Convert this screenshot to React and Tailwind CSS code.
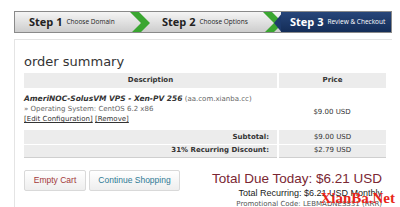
import React from 'react'

function Chevron({ dark }) {
  return (
    <svg width="20" height="22" viewBox="0 0 20 22" className="shrink-0 -mx-[2px]">
      <polygon points="0,0 9,0 20,11 9,22 0,22 11,11" fill="#3aa631" />
      {dark && <polygon points="11,11 20,0 20,22" fill="#1d3a6c" />}
    </svg>
  )
}

export default function App() {
  return (
    <div className="w-[400px] h-[207px] bg-white overflow-hidden relative" style={{ fontFamily: '"DejaVu Sans", Verdana, sans-serif' }}>
      <div className="pt-[11px] px-[14px]">
        {/* steps */}
        <div className="flex h-[22px] w-[378px] border border-[#8a8a8a] bg-gradient-to-b from-[#f5f5f5] to-[#cdcdcd] text-[#222] overflow-hidden whitespace-nowrap" style={{ fontFamily: '"Open Sans", sans-serif' }}>
          <div className="flex items-center w-[117px] pl-[14px] gap-[4px] shrink-0">
            <span className="text-[11px] font-bold">Step 1</span>
            <span className="text-[6.5px]">Choose Domain</span>
          </div>
          <Chevron />
          <div className="flex items-center flex-1 pl-[14px] gap-[4px]">
            <span className="text-[11px] font-bold">Step 2</span>
            <span className="text-[6.5px]">Choose Options</span>
          </div>
          <Chevron dark />
          <div className="flex items-center w-[110px] pl-[9px] gap-[4px] bg-gradient-to-b from-[#27467a] to-[#142d58] text-white shrink-0">
            <span className="text-[11px] font-bold">Step 3</span>
            <span className="text-[6.5px]">Review &amp; Checkout</span>
          </div>
        </div>

        {/* panel */}
        <div className="mt-[6px] w-[378px] border-l border-t border-[#e4e4e4] px-[9px] pt-[14px]">
          <div className="text-[13px] text-[#333] leading-[16px]">order summary</div>
          <table className="mt-[3px] w-[362px] text-[7px] text-[#333] border-collapse whitespace-nowrap">
            <thead>
              <tr className="bg-[#ececec] h-[15px]">
                <th className="font-bold text-center border-r-2 border-white w-[254px]">Description</th>
                <th className="font-bold text-center">Price</th>
              </tr>
            </thead>
            <tbody>
              <tr className="h-[42px]">
                <td className="align-middle leading-[10px]">
                  <div><span className="italic font-bold text-[7.5px]">AmeriNOC-SolusVM VPS - Xen-PV 256</span> <span className="text-[#666]">(aa.com.xianba.cc)</span></div>
                  <div className="text-[#666]">» Operating System: CentOS 6.2 x86</div>
                  <div className="text-[#333]"><span className="underline">[Edit Configuration]</span> <span className="underline">[Remove]</span></div>
                </td>
                <td className="text-center align-middle pt-[6px]">$9.00 USD</td>
              </tr>
              <tr className="bg-[#ececec] h-[14px] border-b border-white">
                <td className="text-right font-bold pr-[8px] border-r-2 border-white">Subtotal:</td>
                <td className="text-center">$9.00 USD</td>
              </tr>
              <tr className="bg-[#ececec] h-[13px] border-b border-[#cfcfcf]">
                <td className="text-right font-bold pr-[8px] border-r-2 border-white">31% Recurring Discount:</td>
                <td className="text-center">$2.79 USD</td>
              </tr>
            </tbody>
          </table>

          <div className="flex justify-between mt-[12px] whitespace-nowrap" style={{ fontFamily: '"Liberation Sans", Arial, sans-serif' }}>
            <div className="flex gap-[3px] h-[21px]">
              <button className="w-[62px] text-[8.5px] text-[#a33a3a] border border-[#d9d9d9] bg-gradient-to-b from-white to-[#eeeeee] rounded-[2px]">Empty Cart</button>
              <button className="w-[91px] text-[8.5px] text-[#2f7a95] border border-[#d9d9d9] bg-gradient-to-b from-white to-[#eeeeee] rounded-[2px]">Continue Shopping</button>
            </div>
            <div className="text-right pr-[1px]">
              <div className="text-[13.5px] leading-[16px] text-[#7a2733] mt-[1px]">Total Due Today: $6.21 USD</div>
              <div className="text-[9px] leading-[11px] text-[#222] mt-[1px]">Total Recurring: $6.21 USD Monthly</div>
              <div className="text-[7px] leading-[10px] text-[#555]" style={{ fontFamily: '"DejaVu Sans", Verdana, sans-serif' }}>Promotional Code: LEBMADNESS31 (RRR)</div>
            </div>
          </div>
        </div>
      </div>
      <div className="absolute right-[5px] bottom-[1px] text-[15px] font-bold text-[#e8261a] leading-[16px]" style={{ fontFamily: '"Liberation Serif", serif' }}>XianBa.Net</div>
    </div>
  )
}
